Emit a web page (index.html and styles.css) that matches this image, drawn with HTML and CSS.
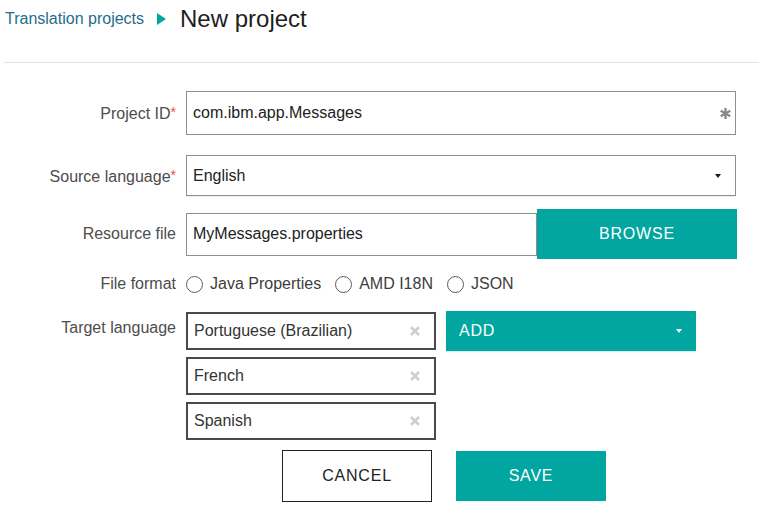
FILE: index.html
```html
<!DOCTYPE html>
<html lang="en">
<head>
<meta charset="utf-8">
<title>New project</title>
<link rel="stylesheet" href="styles.css">
</head>
<body>
<header class="page-header">
  <a class="crumb" href="#">Translation projects</a>
  <span class="crumb-arrow"></span>
  <h1 class="title">New project</h1>
</header>

<form class="form">
  <div class="row row-id">
    <label class="label">Project ID<span class="req">*</span></label>
    <div class="field">
      <div class="input input-tall">
        <span class="value">com.ibm.app.Messages</span>
        <svg class="req-icon" width="11" height="11" viewBox="0 0 11 11"><g stroke="#8a8a8a" stroke-width="2.4" stroke-linecap="butt"><line x1="5.5" y1="0" x2="5.5" y2="11"/><line x1="0.7" y1="2.75" x2="10.3" y2="8.25"/><line x1="0.7" y1="8.25" x2="10.3" y2="2.75"/></g></svg>
      </div>
    </div>
  </div>

  <div class="row row-source">
    <label class="label">Source language<span class="req">*</span></label>
    <div class="field">
      <div class="input input-select">
        <span class="value">English</span>
        <span class="caret caret-dark"></span>
      </div>
    </div>
  </div>

  <div class="row row-resource">
    <label class="label">Resource file</label>
    <div class="field field-inline">
      <div class="input input-file"><span class="value">MyMessages.properties</span></div>
      <button type="button" class="btn btn-primary btn-browse">BROWSE</button>
    </div>
  </div>

  <div class="row row-format">
    <label class="label">File format</label>
    <div class="field radios">
      <label class="radio"><span class="radio-dot"></span>Java Properties</label>
      <label class="radio"><span class="radio-dot"></span>AMD I18N</label>
      <label class="radio"><span class="radio-dot"></span>JSON</label>
    </div>
  </div>

  <div class="row row-target">
    <label class="label label-top">Target language</label>
    <div class="field field-inline field-top">
      <div class="chips">
        <div class="chip"><span>Portuguese (Brazilian)</span><svg class="chip-x" width="10" height="10" viewBox="0 0 10 10"><g stroke="#cfcfcf" stroke-width="2.6"><line x1="1" y1="1" x2="9" y2="9"/><line x1="9" y1="1" x2="1" y2="9"/></g></svg></div>
        <div class="chip"><span>French</span><svg class="chip-x" width="10" height="10" viewBox="0 0 10 10"><g stroke="#cfcfcf" stroke-width="2.6"><line x1="1" y1="1" x2="9" y2="9"/><line x1="9" y1="1" x2="1" y2="9"/></g></svg></div>
        <div class="chip"><span>Spanish</span><svg class="chip-x" width="10" height="10" viewBox="0 0 10 10"><g stroke="#cfcfcf" stroke-width="2.6"><line x1="1" y1="1" x2="9" y2="9"/><line x1="9" y1="1" x2="1" y2="9"/></g></svg></div>
      </div>
      <button type="button" class="btn btn-primary btn-add"><span>ADD</span><span class="caret caret-light"></span></button>
    </div>
  </div>

  <div class="actions">
    <button type="button" class="btn btn-cancel">CANCEL</button>
    <button type="button" class="btn btn-primary btn-save">SAVE</button>
  </div>
</form>
</body>
</html>
```

FILE: styles.css
```css
* { box-sizing: border-box; }

body {
  margin: 0;
  background: #ffffff;
  font-family: "Liberation Sans", Arial, sans-serif;
  font-size: 16px;
  color: #222;
}

.page-header {
  display: flex;
  align-items: center;
  height: 63px;
  margin-left: 4px;
  padding-left: 1px;
  padding-bottom: 25px;
  border-bottom: 1px solid #e3e3e3;
}

.crumb {
  color: #246d8c;
  text-decoration: none;
  font-size: 16px;
  line-height: 18px;
}

.crumb-arrow {
  width: 0;
  height: 0;
  margin-left: 13px;
  margin-right: 14px;
  border-top: 6px solid transparent;
  border-bottom: 6px solid transparent;
  border-left: 9px solid #00a69f;
}

.title {
  margin: 0;
  font-size: 24px;
  font-weight: normal;
  color: #1e1e1e;
  line-height: 28px;
}

.form {
  padding-top: 28px;
}

.row {
  display: flex;
  align-items: center;
}

.label {
  width: 186px;
  flex: none;
  padding-right: 10px;
  text-align: right;
  color: #4d4d4d;
  line-height: 18px;
}

.req { color: #e8513d; font-size: 14px; vertical-align: 2px; }

.field { flex: none; }

.field-inline {
  display: flex;
  align-items: center;
}

.input {
  display: flex;
  align-items: center;
  border: 1px solid #8f8f8f;
  background: #fff;
  padding: 0 6px;
  color: #222;
}

.value { flex: 1; }

.input-tall {
  width: 550px;
  height: 44px;
  padding-right: 4px;
}

.row-id { margin-bottom: 20px; }

.input-select {
  width: 550px;
  height: 41px;
  padding-right: 14px;
  box-shadow: 0 1px 0 #eeeeee;
}

.row-source { margin-bottom: 13px; }

.caret {
  width: 0;
  height: 0;
  border-left: 3.5px solid transparent;
  border-right: 3.5px solid transparent;
}
.caret-dark { border-top: 4px solid #1a1a1a; }
.caret-light { border-top: 4px solid #ffffff; }

.input-file {
  width: 351px;
  height: 43px;
}

.btn {
  font-family: "Liberation Sans", Arial, sans-serif;
  font-size: 16px;
  letter-spacing: 0.8px;
  border: none;
  cursor: pointer;
}

.btn-primary {
  background: #00a69f;
  color: #ffffff;
}

.btn-browse {
  width: 200px;
  height: 50px;
}

.row-resource { margin-bottom: 15px; }

.row-format { height: 20px; margin-bottom: 18px; }

.radios {
  display: flex;
  align-items: center;
  gap: 14px;
}

.radio {
  display: flex;
  align-items: center;
  gap: 7px;
  color: #3d3d3d;
  line-height: 18px;
}

.radio-dot {
  width: 17px;
  height: 17px;
  border-radius: 50%;
  border: 1px solid #5c5c5c;
  background: #fff;
}

.row-target { align-items: flex-start; margin-bottom: 10px; }

.label-top { padding-top: 7px; }

.field-top { align-items: flex-start; }

.chips {
  display: flex;
  flex-direction: column;
  gap: 7px;
}

.chip {
  width: 250px;
  height: 38px;
  border: 2px solid #4a4a4a;
  display: flex;
  align-items: center;
  justify-content: space-between;
  padding: 0 14px 0 6px;
  color: #333;
}

.btn-add {
  width: 250px;
  height: 40px;
  margin-left: 10px;
  margin-top: -1px;
  display: flex;
  align-items: center;
  justify-content: space-between;
  padding: 0 14px 0 13px;
  box-shadow: 0 1px 1px #d8ecea;
}

.actions {
  display: flex;
  align-items: center;
  gap: 24px;
  padding-left: 282px;
}

.btn-cancel {
  width: 150px;
  height: 52px;
  background: #fff;
  border: 1px solid #222;
  color: #222;
}

.btn-save {
  width: 150px;
  height: 50px;
}
```
